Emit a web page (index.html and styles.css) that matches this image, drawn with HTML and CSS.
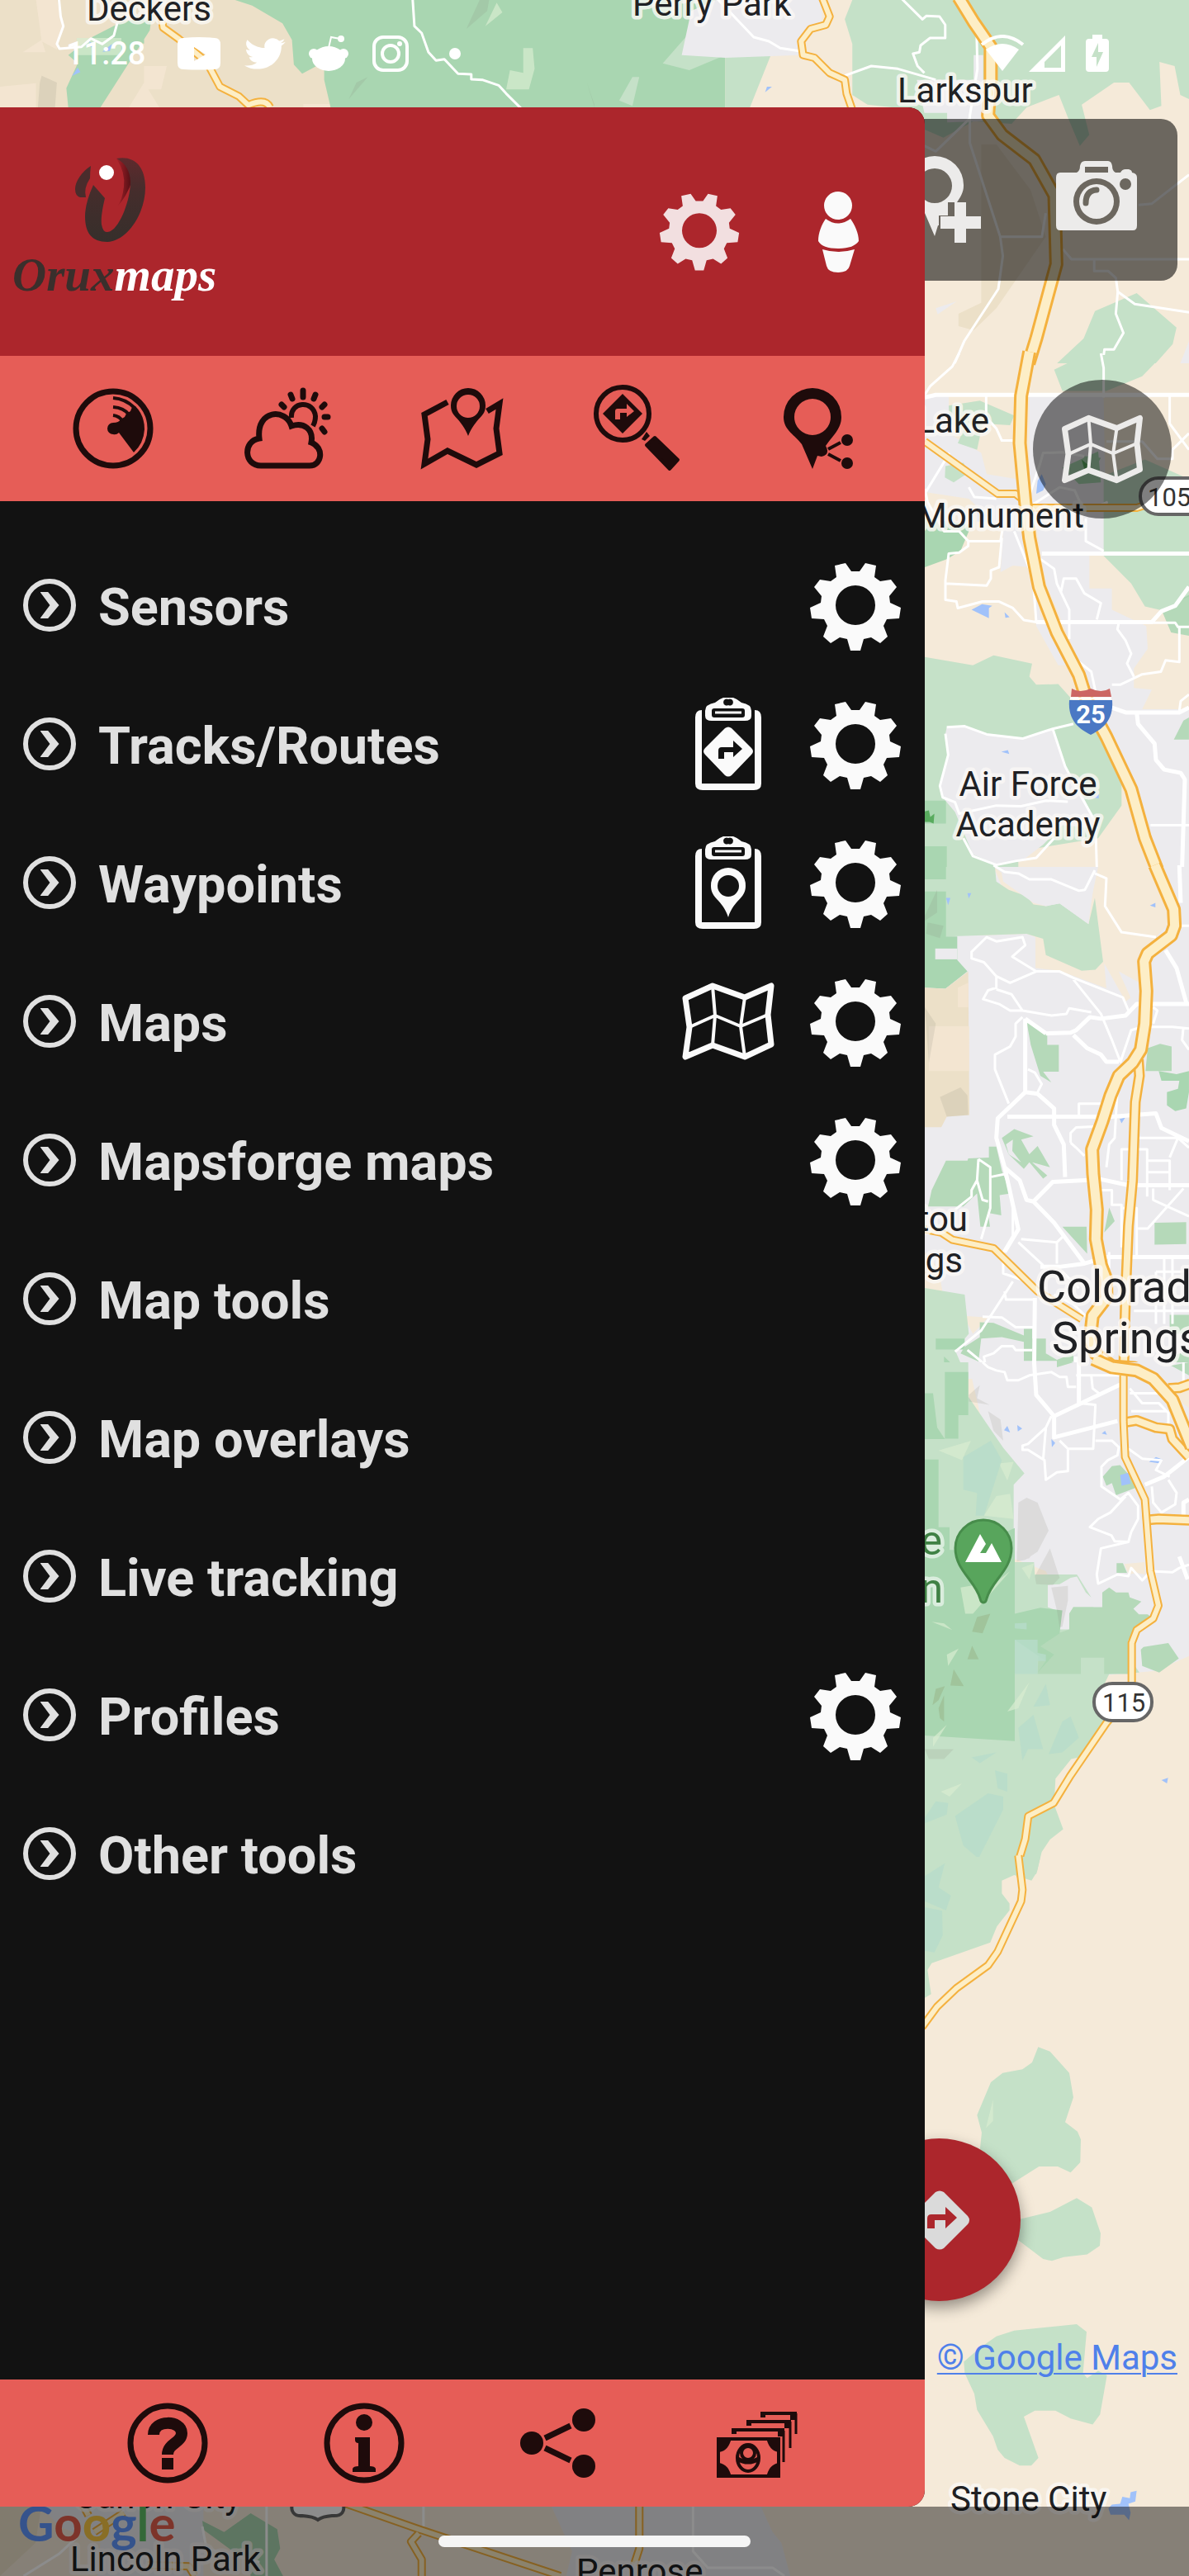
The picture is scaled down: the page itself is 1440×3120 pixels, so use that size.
FILE: index.html
```html
<!DOCTYPE html>
<html lang="en">
<head>
<meta charset="utf-8">
<meta name="viewport" content="width=device-width, initial-scale=1">
<title>OruxMaps</title>
<link rel="stylesheet" href="styles.css">
</head>
<body>
<div class="screen">

<svg class="map" viewBox="0 0 1440 3120" preserveAspectRatio="xMaxYMin slice" aria-hidden="true">
  <defs>
    <path id="n-i25" d="M960 -10L1000 80L1045 170L1045 290L1038 420L1075 490L1160 580L1213 710L1218 960L1165 1230L1145 1320"/>
    <path id="n-67" d="M600 -10L620 60L610 90L570 105L545 150L550 200L580 210L620 265L660 290L665 340L685 420"/>
    <path id="nw-67" d="M425 50L430 100L470 140L545 225L580 315L630 350L655 382Q700 355 712 390"/>
    <path id="c-i25" d="M440 -10L410 125L405 270L425 450L440 560L475 710L540 850L620 980L650 1060L720 1170L810 1330L860 1480L904 1575"/>
    <path id="c-105" d="M60 265L325 425L390 425L412 440M440 468H830L880 455"/>
    <path id="d-i25" d="M896 -6L965 130L968 180L955 210L870 265L857 290L865 380L860 480L845 560L815 600L765 640L735 700L705 780L668 865L672 940L685 1050L682 1140L700 1220L718 1260L720 1320L670 1375L660 1450L680 1490L740 1530L820 1535L890 1562"/>
    <path id="d-87" d="M836 590L840 640L825 720L815 960L800 1100L790 1300L782 1568"/>
    <path id="d-24" d="M60 1110L120 1120L160 1142L310 1168L470 1300L630 1385"/>
    <path id="e-i25" d="M672 -10L740 15L830 25L890 50L960 115L1030 260"/>
    <path id="e-b" d="M945 80L985 78L1025 66M780 185L830 178L900 200L950 205L960 235L1020 290M852 484L910 480L1025 484"/>
    <path id="e-115" d="M782 40L782 180L788 290L860 420L880 640L909 745L890 785L830 820L812 860L812 1010L720 1105L590 1265L528 1350L436 1390L425 1460L398 1535L410 1575"/>
    <path id="f-115" d="M400 -5L415 70L410 95L325 205L290 235L175 285L105 325L50 370"/>
    <path id="s-50" d="M570 505L710 610L950 780M710 625L697 655L715 720L715 785M1084 520L1084 680L1075 740M150 560L140 520M160 620L210 550M250 740L320 745L330 780"/>
    <path id="gear" fill-rule="evenodd" d="M51 15H61L68 5L81 8L79 22L86 27L99 25L106 34L97 45L98 53L111 59L109 72L94 73L90 81L95 94L86 102L75 95L66 97L62 111H50L46 97L37 95L26 102L17 94L22 81L18 73L3 72L1 59L14 53L15 45L6 34L13 25L26 27L33 22L31 8L44 5ZM56 32A24 24 0 1 0 56 80A24 24 0 1 0 56 32Z"/>
    <g id="folded-map" fill="none" stroke="currentColor" stroke-linejoin="round">
      <path stroke-width="7" d="M4 20L37 5L76 19L108 5L104 40L108 76L76 91L37 77L4 91L9 55Z"/>
      <path stroke-width="4" d="M37 5L40 41L37 77M76 19L71 54L76 91M9 55L40 41L71 54L104 40"/>
    </g>
    <g id="clipboard" fill="none" stroke="currentColor">
      <path stroke-width="8" stroke-linejoin="round" d="M24 19Q20 19 20 24V104Q20 108 25 108H87Q92 108 92 104V24Q92 19 88 19"/>
      <path fill="currentColor" fill-rule="evenodd" stroke="none" d="M40 6Q56 -8 72 6Q84 8 84 16V22Q84 28 76 28H36Q28 28 28 22V16Q28 8 40 6ZM56 2A4 4 0 1 0 56 9A4 4 0 1 0 56 2M39 13Q36 13 36 16V21Q36 24 39 24H73Q76 24 76 21V16Q76 13 73 13Z"/>
      <path stroke-width="3" d="M40 18H72"/>
    </g>
  </defs>

  <rect width="1440" height="3120" fill="#f5ead9"/>

  <!-- north-west -->
  <g class="tile" transform="translate(0 0) scale(.4592 .3333)">
    <path class="tan" d="M0 0H1568V390H0Z"/>
    <path class="sand" d="M95 0H150L165 95L150 180L110 150ZM0 315L95 302V390H0ZM380 240H440L425 325H380ZM60 190L110 145L120 190ZM800 378H870V390H800ZM380 300L420 390H340Z"/>
    <path class="forest" d="M180 200L235 140L320 80L400 60L395 110L265 390H180L175 320L205 230ZM620 0L665 20L745 85L770 145L775 235L797 268L855 225L855 290L872 390H1568V0ZM340 120H380V158H340Z"/>
    <path class="pale" d="M1380 175H1405L1410 250L1395 325H1335L1345 255L1380 265ZM1310 10L1325 45L1280 95ZM202 138H320V200H202Z"/>
    <path class="shade" d="M1265 0H1290L1285 40L1230 105ZM110 275L150 300L145 390H0L100 390L105 300ZM920 360L970 280L940 300ZM1548 300L1568 380V390Z"/>
    <path class="water" d="M205 245L212 262L190 276ZM235 150L250 165L240 172ZM295 160L290 185L270 188Z"/>
    <path class="street" d="M155 -10L160 60L167 95L150 160L157 177L215 170L240 140L270 160L300 130L310 80M1088 -10L1093 95L1112 120L1130 190L1150 220L1172 215L1208 268L1243 270V288L1272 290L1315 310L1335 340L1375 395"/>
    <use href="#nw-67" class="casing small"/><use href="#nw-67" class="road small"/>
  </g>

  <!-- north-east -->
  <g class="tile" transform="translate(720 0) scale(.4592 .3333)">
    <path class="forest" d="M0 0H345V390H0Z"/>
    <path class="green" d="M345 200H465L410 390H345ZM180 230L250 120L345 200L250 255ZM100 280H118L100 385L65 365Z"/>
    <path class="green" d="M680 0L660 70L680 160V345L720 380L850 400L870 470L920 500L1000 440L1100 450L1140 390L1225 345L1250 432L1280 530L1305 490L1285 380L1370 300L1410 300L1465 400L1495 385L1490 225L1530 240L1545 345L1568 360V0Z"/>
    <path class="town" d="M255 40L230 200L345 210L540 200L545 150L560 100L600 80V0H320ZM850 290H1000V200H1025V440L930 445V410H870Z"/>
    <path class="tan" d="M1020 525H1060L1150 690L1190 860L1060 1120L1000 1200L960 1185V1140L1020 1100Z"/>
    <path class="green" d="M1430 1065L1535 1190L1525 1250L1480 1320H1220L1290 1230L1320 1130Z"/>
    <path class="water" d="M455 315L468 315L450 335Z"/>
    <path class="town" d="M900 1120L955 1095L905 1142ZM1568 1240V1320H1545Z"/>
    <path class="street" d="M1008 130L1010 250L990 420V520L1070 860L1077 930L1065 1050L975 1240L950 1320M660 275L730 240L800 250L900 290M810 -5L865 70L875 58L910 60L925 90V138H885L860 165L857 190L840 195L852 240L870 265M320 -10L420 135L460 150L490 175L540 185M870 530L900 550L990 430M1070 860H1180L1190 775M1435 745L1470 740L1568 635M1235 905L1258 942H1568M1318 942V985H1355L1375 1010L1380 1060L1425 1105L1568 1135M1380 1060L1375 1140L1395 1210L1370 1270H1345L1340 1320"/>
    <use href="#n-67" class="casing small"/><use href="#n-67" class="road small"/>
    <use href="#n-i25" class="casing"/><use href="#n-i25" class="road"/>
  </g>

  <!-- Monument and the Air Force Academy -->
  <g class="tile" transform="translate(1100 430) scale(.3333 .3954)">
    <path class="town" d="M60 120H147V240L265 300L285 365L395 380L440 600L480 800L585 950H545L465 830L440 650L380 645L335 665L345 540L220 440L60 420ZM440 125H1020L710 130L720 600L658 610V715H740V780L865 830L870 900L820 960V1020L885 1025L850 1085H1020V1568H880L850 1400L700 1130L600 900L500 700L440 400Z"/>
    <path class="green" d="M530 45L640 0H925L850 65L720 110H560ZM60 925L235 950L310 920L450 945L440 985L465 1010L545 1008L590 1050L700 1150L775 1290V1380L690 1480L400 1520V1568H60ZM147 155L260 140L385 185L370 215L270 210L250 290L180 270L200 230L150 210ZM710 370L860 320L1020 380V745L960 790L860 770L810 700L710 615ZM135 340L200 330L220 360L165 390L133 375Z"/>
    <path class="forest" d="M60 500L230 520L190 600L140 625L60 650ZM560 345L690 295L700 390L620 395ZM985 750L1020 735V815H985ZM60 1365H137V1435H60ZM60 1505H140V1568H60ZM575 1370L620 1350L640 1390L600 1410Z"/>
    <path class="park" d="M1000 1120L1020 1110V1178H965ZM920 780L1020 740V860L955 850Z"/>
    <path class="town" d="M140 1140L205 1137L285 1162L415 1175L525 1145L570 1260L640 1360L690 1450L560 1440L490 1500L420 1545L320 1560L235 1530L170 1400L120 1350L115 1320L145 1225L135 1160Z"/>
    <path class="forest" d="M625 345L640 310L700 315L680 345ZM630 390L655 355L650 390Z"/>
    <path class="wood" d="M60 1398L75 1395L80 1415L95 1405L92 1435L78 1430L60 1430ZM630 320L665 345L640 350Z"/>
    <path class="water" d="M230 780L268 763L305 768L293 775V806ZM350 788L368 803L353 805ZM338 1215L362 1210L367 1222ZM485 365L500 395L490 415L465 425L470 385ZM250 480L290 490L285 510H250ZM670 1355L692 1345V1358Z"/>
    <path class="street wide" d="M60 130L100 122H1020M485 608H1020M465 818H885L920 785L970 768L1020 710M740 1080L790 1095H985L1020 1080M830 1095L835 1130L895 1190L900 1240L930 1270L990 1280L1005 1300L995 1568"/>
    <path class="street" d="M60 122L80 95L160 35L185 -5M283 122V190L320 225L340 262H380M700 -5L710 40V130M60 410L70 450L130 540L185 540L218 570H335L343 530M218 570V585L185 605L147 608L135 690V750L175 755L180 775L270 755H330L380 775L420 812L465 818L455 700M135 700L285 706L300 685V660L330 650L340 560M385 540L445 665M480 625L530 655L540 700L585 780V870M555 725L565 685L610 685L640 730L700 760L685 810M765 820L760 840L790 875L810 915L795 945L820 985M985 835L985 940L935 935L918 970L850 978L770 1010H740M885 820H970L980 833H1020M590 920L665 970L680 1030M135 1160L145 1225L115 1320L125 1355L170 1370L185 1405L320 1380L410 1382L500 1365L580 1368M140 1140L205 1137L285 1162L415 1175L525 1145L600 1130M525 1145L570 1260L620 1340L680 1430L685 1568M200 1480L235 1535L320 1562L390 1550L465 1540L530 1480M950 125L950 210L1020 290M720 265H850L905 318H960V290L1020 240M440 430L480 330L490 300L560 298L640 310M440 465L550 405L605 415L640 480L725 450M985 1090L990 1060L1020 1040M60 425L150 300M220 405L240 435L320 440M645 500V570L710 600M880 1440H1020"/>
    <use href="#c-105" class="casing small"/><use href="#c-105" class="road small"/>
    <use href="#c-i25" class="casing"/><use href="#c-i25" class="road"/>
  </g>

  <!-- Colorado Springs -->
  <g class="tile" transform="translate(1100 1050) scale(.3333 .3954)">
    <path class="town" d="M60 0H1020V1568H60Z"/>
    <path class="sand-flat" d="M310 0L340 60L250 210L430 205L462 215V310L550 318L720 372L712 295L790 412L808 400L765 320L840 355L850 260L950 170L900 0H690L640 200ZM60 1180L110 1230L125 1305L60 1290ZM200 1375L290 1380L235 1430Z"/>
    <path class="green" d="M60 0H315L320 45L365 70L430 90L455 115L500 120L550 112L655 175L678 95L708 290L680 315L630 318L500 270L490 220L430 205L140 213H60ZM60 1290L205 1310L220 1430L170 1480L215 1568H60Z"/>
    <path class="town" d="M335 0H685L678 30L655 175L550 112L500 120L455 110L345 45Z"/>
    <path class="forest" d="M60 75H137V213H178V285L215 320L135 373L60 370ZM100 1445H205V1478H100ZM130 1500L215 1568H130ZM60 0H137V38H60Z"/>
    <path class="town" d="M98 250H178V283H98Z"/>
    <path class="tan" d="M60 370L135 373L218 320L222 760L140 765L120 797H60Z"/>
    <path class="sand" d="M75 488H222V625H75ZM180 370L218 355V430H180Z"/>
    <path class="shade" d="M60 150L105 70V140L60 165ZM70 170L128 180L115 218L65 205ZM115 705L190 675L215 700L218 760L140 765ZM75 600L100 480L60 430Z"/>
    <path class="park" d="M430 473L505 515V545H547V627H490L520 660L480 640L445 545ZM870 555L915 542L957 550V625H862ZM137 900H215L218 893L293 890V857H320L340 930L372 1000L332 1005L338 1067L290 1060L297 1102H262L250 1000L200 1040L72 1040L85 990ZM340 830L385 803L455 825L410 835L440 880L470 855L515 920L450 905L505 945L490 955L440 905L420 925L365 880ZM560 1102H648L650 1185ZM895 1090L1010 1088V1155L895 1157ZM730 1043L750 1085L712 1120ZM260 1395L310 1397L420 1435V1415H450V1470L420 1455L340 1440L265 1445L255 1515L190 1490L205 1470L260 1440ZM420 1445H500V1490L540 1510L600 1490V1515L540 1533V1513H420ZM950 1372H1020V1430H950ZM955 1500L1020 1480V1560L985 1558Z"/>
    <path class="forest" d="M910 625L975 635L1020 625V690L1010 740L970 748L940 730V690L980 680L985 655L920 655Z"/>
    <path class="town" d="M355 850L380 835L378 870L410 905L365 880Z"/>
    <path class="water" d="M137 95H153L145 117ZM215 80H229L220 97ZM878 118L898 110V124ZM768 772L788 768L775 785Z"/>
    <path class="street wide" d="M425 465V690L470 695L530 740V790L565 850L570 950M500 510L425 465M500 510L590 508L610 500L660 460L700 465L790 455L830 420H1020M600 515L650 555L700 575L720 597H765M360 765H740L900 755L920 800L1020 840M425 690L325 770L320 830L350 920L400 1110L350 1180M350 920L405 960L430 1020L455 1025L530 1090L640 1215L720 1195H1020M455 1025L525 965L700 957L800 975H1020M985 -5L990 110M935 255L975 310L1010 415M460 1320L457 1568M640 1215L550 1225H480M610 1500V1568"/>
    <path class="street" d="M310 -5L350 15L400 20L440 38L520 38L620 73L642 70L678 10M678 20L720 35L715 120L775 200L900 215M465 320L370 355L320 335L275 292L230 280V260L285 215L320 228L415 215L425 240L378 275L465 320L550 320L600 340L780 400L800 440M320 335V370L290 378L272 405L330 420L370 440H415L375 390L320 375M415 440L520 455L575 450L585 433L665 445M600 345L700 450L740 530L770 595M415 460L390 480V520L370 550L315 575V620L365 725M435 620L460 630L485 665L470 690M770 600L810 500L850 490H960L1020 495M620 760V725H700M590 845V815L610 798L690 795M590 845L610 860L640 885M775 960V865H868V1010M830 830H980L1020 860M870 900H950V990M870 935H950M980 830L950 890M700 990H740V1035H775V1165M780 1045H830V1190M835 1108H870L1000 985M890 985V1020L1020 1070M255 895L298 920V1045L265 1140M255 895L250 960L230 990V1010L170 1050M250 960L270 1020L290 1025M298 950L355 940M380 1045V1130L345 1180V1245L500 1290M400 1150L490 1220M410 1140L540 1150L565 1130M540 1150V1215M170 1485L265 1420L380 1270M350 1300L355 1325H460M270 1378L340 1380L390 1410H460M215 1480L280 1525L275 1500L310 1490L340 1468H380L390 1480H450M900 1240H1020M900 1240V1400M930 1190V1400M960 1200V1400M820 1360H1020M650 1380L600 1340L530 1310M760 680L750 830L730 850L720 920M990 180H1020M890 430L905 440L890 480M1000 490L995 530L1020 560M730 1180V1230M560 1240L620 1290"/>
    <use href="#d-24" class="casing small"/><use href="#d-24" class="road small"/>
    <use href="#d-87" class="casing mid"/><use href="#d-87" class="road mid"/>
    <use href="#d-i25" class="casing"/><use href="#d-i25" class="road"/>
  </g>

  <!-- Cheyenne Mountain -->
  <g class="tile" transform="translate(1100 1650) scale(.3333 .3954)">
    <path class="town" d="M218 0H1020V900L900 945L700 960L500 640L380 600Z"/>
    <path class="green" d="M60 0H218V105L345 262L422 340L383 375V510L387 612L457 612L460 650H613L665 720L640 710L840 950L730 955L710 990L740 1105L620 1210L592 1215L535 1275L530 1355L563 1430L515 1462L485 1500L465 1568H60Z"/>
    <path class="town" d="M507 682L550 680L590 660L613 656L645 705L665 720L705 700V750H600L585 770V818H550L540 760L507 750Z"/>
    <path class="park" d="M585 770L600 750H705V705L730 690L755 705H800L805 720L847 733L818 755L838 772H870L890 785L830 820L800 850V955H712V905H627V955H470L475 850L585 818ZM845 880L855 872L945 860L983 907L912 950L850 930ZM707 350L740 318L770 315L840 380L755 407L740 370L720 378ZM757 615H780L795 645H757ZM540 0H600L540 15ZM955 10L1020 0V40Z"/>
    <path class="forest" d="M133 30H218V162H182V234H133ZM60 95H90L105 200L133 235H60ZM60 298H110V505H60ZM60 505H150V575H205L387 508V1160L60 1143ZM387 770L480 752L560 760L550 830L480 870L530 895L470 950L500 915L387 850Z"/>
    <path class="pale" d="M110 270L228 240L195 300ZM330 310L383 305L360 362ZM275 470L320 410L370 403L383 480ZM190 690L260 680L295 690L370 640L235 770H207ZM85 795L130 800L160 820ZM140 895L183 877L145 930ZM360 1070L440 980L400 1060ZM90 1150L140 1110L90 1178ZM118 1315L195 1290L150 1330ZM412 630L457 615L440 665Z"/>
    <path class="teal" d="M200 290L300 240L340 300L275 470L245 470L250 400L200 390ZM387 850H470L470 890L500 895V915H470V955H387ZM400 1120L455 1080L490 1185L435 1185L415 1220ZM510 1200L560 1100L590 1085L620 1150L560 1195ZM170 1390L290 1320L345 1330L345 1370L255 1520L200 1480ZM60 1395L100 1345L145 1350L140 1385L60 1412ZM315 1250L360 1260V1315L325 1305ZM230 1210L320 1195L260 1228ZM455 1055L500 985L515 1050ZM387 800L430 798V818L387 815Z"/>
    <path class="shade" d="M400 430L430 415L470 430L510 515L470 580L425 605L395 610ZM425 530L455 505L475 550L440 600L395 610V580ZM460 655L515 570L550 660L525 682L465 680ZM520 690L580 685V730L560 810L550 812L540 760ZM60 1185H165L130 1215H75ZM220 100L260 70L250 110L295 130L220 120ZM290 150L335 175L345 240L310 210Z"/>
    <path class="olive" d="M232 825L250 780L298 770L270 830ZM215 910L232 868L256 910ZM153 990L165 940L202 992ZM88 1050L100 1000L133 992L110 1035ZM110 1060L130 1020V1100L115 1090Z"/>
    <path class="sand-flat" d="M785 618L858 612L860 650L830 645L800 650ZM940 60L1020 70V140L970 110Z"/>
    <path class="water" d="M770 345L800 338L808 372L775 378ZM875 305L900 290L924 298L915 310ZM348 208L360 195L370 215ZM396 192L414 203L398 212ZM520 235L534 247L522 260ZM703 218L715 210L722 222ZM920 1280L944 1273L940 1290Z"/>
    <path class="street wide" d="M457 -5L465 100L530 165V230L760 180M530 165L770 68M620 0V130M860 375L930 350L1020 290M985 595L1015 665M1000 470V430L1020 420"/>
    <path class="street" d="M270 0L290 15L320 25L350 30L360 55H400L440 40L520 30L550 45H575L580 75H610M520 165L500 200L435 250L415 255V268H435L495 300L500 360L540 337L580 333V265L550 240M500 200L490 300M580 265H672L680 130L620 125M680 240H740L765 260L760 285L725 300L702 320V380L770 420L800 400L835 440V480L810 520L800 550L750 548L738 530L660 505L690 480L735 460L790 410M800 550L700 570L685 650L690 678L760 650L800 655L810 630L850 668L870 650M885 380L890 430L920 460L970 435L975 400L945 360M880 640L960 643L985 630L1020 620M665 40L670 80L700 100M805 80L850 125H910L945 155V190M805 95H940M810 150H940M610 40H770M800 265L850 295L920 300L900 330L950 350M1000 0V60"/>
    <use href="#e-b" class="casing mid"/><use href="#e-b" class="road mid"/>
    <use href="#e-115" class="casing small"/><use href="#e-115" class="road small"/>
    <use href="#e-i25" class="casing"/><use href="#e-i25" class="road"/>
  </g>

  <!-- south-east plains -->
  <g class="tile" transform="translate(1100 2250) scale(.3333 .5549)">
    <path class="green" d="M60 -2H480L468 30L448 50L385 38L340 50V78L368 100V115L322 150L298 185L85 230L70 245L83 298L60 306ZM250 562L300 490L343 470L415 462L450 447L472 413L515 423L585 470L600 523L570 577L615 598L627 615L625 665L590 687L543 674H475L380 710L265 740L260 640L267 600ZM400 790L515 773L612 743L667 763L699 820L696 847L650 866L565 872L522 880L490 876L400 835ZM202 1100L260 1070L320 1045L385 1032L612 1018L648 1035L635 1125L650 1136L690 1120L722 1130L697 1215L670 1237L590 1224L535 1207H460L420 1220L473 1310L447 1327H405L350 1310L325 1292L308 1263L250 1205L240 1170L205 1125Z"/>
    <path class="teal" d="M60 40L133 12L110 65L155 83L137 115L60 95ZM60 108L123 116L125 170L95 207L60 203Z"/>
    <path class="pale" d="M282 590L308 528V575Z"/>
    <path class="water" d="M727 1420L740 1412L770 1410L778 1395L805 1398L808 1385L830 1382L825 1405L800 1410L808 1430L802 1446L785 1434L735 1434Z"/>
    <use href="#f-115" class="casing small"/><use href="#f-115" class="road small"/>
  </g>

  <!-- southern edge -->
  <g class="tile" transform="translate(0 2860) scale(.7143 .3333)">
    <path class="tan" d="M0 528H70L60 660L0 780Z"/>
    <path class="town" d="M70 528H345V780H165L170 660L100 600ZM935 528H1290L1310 620L1325 660L1340 780H960L970 690Z"/>
    <path class="forest" d="M343 580L380 620L425 552L470 610L475 680L465 720L480 780H425L420 730L345 612Z"/>
    <path class="street" d="M718 520V630M452 520V780M343 600L350 680L440 730M1175 520V690L1200 750H1310L1330 780M40 780L100 700L130 640"/>
    <use href="#s-50" class="casing small"/><use href="#s-50" class="road small"/>
  </g>

  <g class="place">
    <text x="105" y="25">Deckers</text>
    <text x="766" y="19">Perry Park</text>
    <text x="1087" y="124">Larkspur</text>
    <text x="1198" y="524" text-anchor="end">Lake</text>
    <text x="1313" y="639" text-anchor="end">Monument</text>
    <text x="1245" y="964" text-anchor="middle">Air Force</text>
    <text x="1245" y="1013" text-anchor="middle">Academy</text>
    <text x="1172" y="1491" text-anchor="end">tou</text>
    <text x="1166" y="1541" text-anchor="end">gs</text>
    <text x="1151" y="3041">Stone City</text>
    <text x="90" y="3038">Cañon City</text>
    <text x="85" y="3114">Lincoln Park</text>
    <text x="698" y="3129">Penrose</text>
  </g>
  <g class="place city">
    <text x="1256" y="1577">Colorado</text>
    <text x="1274" y="1639">Springs</text>
  </g>
  <g class="place summit" text-anchor="end">
    <text x="1141" y="1883">e</text>
    <text x="1142" y="1941">n</text>
  </g>

  <!-- mountain pin -->
  <path d="M1191 1941Q1188 1941 1187 1936C1181 1914 1157 1902 1157 1875A34 34 0 0 1 1225 1875C1225 1902 1201 1914 1195 1936Q1194 1941 1191 1941Z" fill="#58a55c" stroke="#478c4b" stroke-width="3"/>
  <path d="M1169 1892L1187 1858L1194 1870L1187 1881H1194L1201 1869L1213 1892Z" fill="#fff"/>

  <!-- road shields -->
  <g class="shield">
    <rect x="1381" y="579" width="80" height="44" rx="22"/>
    <text x="1390" y="613">105</text>
    <rect x="1325" y="2039" width="70" height="45" rx="22"/>
    <text x="1335" y="2073">115</text>
    <path d="M355 3030C350 3042 357 3048 366 3047Q380 3048 385 3052Q390 3048 402 3047C414 3048 419 3042 415 3030Z"/>
  </g>
  <path d="M1298 834Q1308 840 1321 834Q1334 840 1344 834L1346 844H1297Z" fill="#cc6663"/>
  <path d="M1295 848H1347C1349 874 1334 883 1321 890C1308 883 1293 874 1295 848Z" fill="#4a78c4"/>
  <path d="M1296 846H1346" stroke="#fff" stroke-width="3"/>
  <text class="interstate" x="1321" y="876" text-anchor="middle">25</text>

  <text class="google" x="22" y="3078"><tspan fill="#6297ff">G</tspan><tspan fill="#e35f4e">o</tspan><tspan fill="#f9c845">o</tspan><tspan fill="#6297ff">g</tspan><tspan fill="#5fbd66">l</tspan><tspan fill="#e35f4e">e</tspan></text>
</svg>

<header class="status">
  <time class="clock">11:28</time>
  <div class="notices">
    <svg width="54" height="46" viewBox="0 0 54 46"><path fill="#fff" fill-rule="evenodd" d="M8 4Q27 2 46 4Q53 4 53 12V34Q53 42 46 42Q27 43 8 42Q1 42 1 34V12Q1 4 8 4ZM21 15V32L35 24Z"/></svg>
    <svg width="50" height="46" viewBox="0 0 24 24" preserveAspectRatio="none"><path fill="#fff" d="M23.9 4.6a10 10 0 0 1-2.8.8 5 5 0 0 0 2.2-2.7c-1 .5-2 1-3.1 1.200a4.900 4.900 0 0 0-8.400 4.500C7.700 8.200 4.100 6.300 1.700 3.200a5 5 0 0 0 1.500 6.600c-.8 0-1.600-.2-2.200-.6v.1c0 2.400 1.700 4.400 3.900 4.800a5 5 0 0 1-2.200.1 4.900 4.900 0 0 0 4.600 3.400A9.900 9.900 0 0 1 0 19.500a14 14 0 0 0 7.500 2.200c9.100 0 14-7.500 14-14v-.6a10 10 0 0 0 2.400-2.500z"/></svg>
    <svg width="48" height="46" viewBox="0 0 48 46"><g fill="#fff"><ellipse cx="24" cy="29" rx="20" ry="15"/><circle cx="6" cy="23" r="6"/><circle cx="42" cy="23" r="6"/><circle cx="39" cy="5" r="4"/></g><path d="M24 16L27 3L38 5" fill="none" stroke="#fff" stroke-width="2"/></svg>
    <svg width="46" height="46" viewBox="0 0 46 46" fill="none" stroke="#fff" stroke-width="4"><rect x="3" y="3" width="40" height="40" rx="11"/><circle cx="23" cy="23" r="10"/><circle cx="34" cy="11" r="3" fill="#fff" stroke="none"/></svg>
    <svg width="14" height="14" viewBox="0 0 14 14"><circle cx="7" cy="7" r="7" fill="#fff"/></svg>
  </div>
  <div class="signals">
    <svg width="54" height="46" viewBox="0 0 54 46"><path fill="#fff" d="M7 18Q27 4 47 18L27 44Z"/><path d="M2 12Q27 -8 52 12" fill="none" stroke="#fff" stroke-width="4"/></svg>
    <svg width="46" height="46" viewBox="0 0 46 46"><path fill="#fff" fill-rule="evenodd" d="M1 45L45 1V45ZM20 40H40V13L20 33Z"/></svg>
    <svg width="28" height="46" viewBox="0 0 28 46"><path fill="#fff" fill-rule="evenodd" d="M8 0H20V5H24Q28 5 28 9V41Q28 45 24 45H4Q0 45 0 41V9Q0 5 4 5H8ZM15 10L7 27H13V39L21 21H15Z"/></svg>
  </div>
</header>

<main class="stage">
  <div class="map-bar">
    <button class="icon" aria-label="New waypoint"><svg width="98" height="106" viewBox="0 0 98 106"><path fill="#ecebea" fill-rule="evenodd" d="M36 0A35 35 0 0 1 71 36C71 44 67 50 63 56H52V72H41V84H40L36 97L21 62C12 54 1 46 1 36A35 35 0 0 1 36 0ZM36 15A21 21 0 1 0 36 57A21 21 0 1 0 36 15Z"/><path fill="#ecebea" d="M60 56H74V73H92V88H74V105H60V88H43V73H60Z"/></svg></button>
    <button class="icon" aria-label="Take photo"><svg width="98" height="106" viewBox="0 0 98 106"><path fill="#ecebea" fill-rule="evenodd" d="M5 20H25Q29 18 29 12Q30 6 35 6H63Q67 6 68 12Q68 18 72 20H78Q80 16 84 16H88Q92 17 92 20Q98 21 98 26V84Q98 90 93 90H5Q0 90 0 84V26Q0 20 5 20ZM35 13V20H63V13ZM49 27A28 28 0 1 0 49 83A28 28 0 1 0 49 27ZM84 27A7 7 0 1 0 84 41A7 7 0 1 0 84 27Z"/><circle cx="49" cy="55" r="21" fill="#ecebea"/><path d="M36 57Q36 42 49 41" fill="none" stroke="#6c685f" stroke-width="7" stroke-linecap="round"/></svg></button>
  </div>
  <button class="icon map-switch" aria-label="Switch map"><svg width="98" height="98" viewBox="0 -8 112 112"><use href="#folded-map"/></svg></button>
  <button class="icon route" aria-label="Navigate"><svg width="76" height="76" viewBox="0 0 76 76"><path fill="#dadada" d="M33 4Q38 1 43 4L72 33Q76 38 72 43L43 72Q38 75 33 72L4 43Q0 38 4 33Z"/><path fill="#ac262c" d="M23 48V36Q23 31 28 31H45V22L59 35L45 48V38H32V48Z"/></svg></button>
  <a class="credit" href="#maps">© Google Maps</a>

  <aside class="drawer">
    <header class="brand">
      <div class="logo">
        <svg width="96" height="104" viewBox="0 0 96 104">
          <defs>
            <linearGradient id="ink" x1="0" y1="1" x2="0" y2="0"><stop offset="0" stop-color="#362f2b"/><stop offset=".6" stop-color="#452d2c"/><stop offset="1" stop-color="#5e2a2d"/></linearGradient>
            <linearGradient id="fold" x1="0" y1="0" x2="1" y2="0"><stop offset="0" stop-color="#a82129"/><stop offset="1" stop-color="#4c0e13"/></linearGradient>
          </defs>
          <path fill="url(#fold)" d="M50 1Q61 18 59 35Q57 52 51 59Q62 48 69 28L63 6Z"/>
          <path fill="#4a2c2c" d="M19 10C8 17 0 29 0 38Q0 46 6 48H13Q10 37 18 25Q18 17 19 10Z"/>
          <path fill="url(#ink)" d="M22 33L36 49C33 62 31 73 32 81Q34 91 39 90C52 90 67 53 67 29Q66 9 50 1C72 -3 85 11 85 36C85 68 63 101 39 102C20 102 12 91 12 71Q12 55 22 33Z"/>
          <circle cx="38" cy="18" r="9" fill="#fff"/>
        </svg>
        <p class="wordmark">Orux<span>maps</span></p>
      </div>
      <div class="brand-actions">
        <button class="icon muted" aria-label="Settings"><svg width="98" height="98" viewBox="0 2 112 112"><use href="#gear" fill="currentColor"/></svg></button>
        <button class="icon" aria-label="Street view"><svg width="98" height="98" viewBox="0 0 98 98" fill="#fafafa"><circle cx="49" cy="17" r="17"/><path d="M34 33Q49 44 64 33C69 40 74 50 74 60Q68 69 49 69Q30 69 25 60C25 50 29 40 34 33ZM30 70Q49 76 69 70L63 90Q61 98 49 98Q37 98 35 90Z"/></svg></button>
      </div>
    </header>

    <nav class="tools" aria-label="Shortcuts">
      <button class="icon" aria-label="Radar"><svg width="106" height="106" viewBox="0 0 106 106"><circle cx="53" cy="53" r="45" fill="none" stroke="currentColor" stroke-width="7"/><path fill="currentColor" d="M53 46Q60 46 62 42L67 39L69 35L74 32L76 27L80 26Q91 37 91 54Q90 71 78 82L60 58Q57 61 53 60A7 7 0 0 1 53 46Z"/><path fill="none" stroke="currentColor" stroke-width="4" d="M53 16Q68 17 79 28M53 27Q66 28 72 36M53 37Q61 38 64 44"/></svg></button>
      <button class="icon" aria-label="Weather"><svg width="106" height="106" viewBox="0 0 106 106" fill="none" stroke="currentColor" stroke-width="7"><path d="M20 98C-1 98 -2 68 18 65C14 30 50 28 57 50C72 45 84 54 81 70C97 76 94 98 79 98Z"/><path stroke-width="6" d="M57 40C55 20 84 18 86 38Q86 45 83 50"/><path stroke-width="7" stroke-linecap="round" d="M71 7V15M56 12L58 17M86 12L84 17M45 24L48 27M97 24L94 27M97 39H101M94 53L97 57"/></svg></button>
      <button class="icon" aria-label="Place on map"><svg width="106" height="106" viewBox="0 0 106 106"><path fill="none" stroke="currentColor" stroke-width="7" d="M35 21L7 36L11 66L7 96L35 80L70 97L98 83L94 53L98 23L83 32"/><path fill="currentColor" fill-rule="evenodd" d="M60 4A21 21 0 0 1 81 25C81 40 70 38 60 62C50 38 39 40 39 25A21 21 0 0 1 60 4ZM60 12A14 14 0 1 0 60 40A14 14 0 1 0 60 12Z"/></svg></button>
      <button class="icon" aria-label="Search routes"><svg width="106" height="106" viewBox="0 0 106 106"><circle cx="35" cy="35" r="32" fill="none" stroke="currentColor" stroke-width="6"/><path fill="currentColor" d="M35 11L59 35L35 59L11 35ZM58 66L64 57L68 62L62 68Z"/><path fill="#e65d57" d="M26 42V32Q26 29 29 29H40V23L49 32L40 39V34H32V42Z"/><path fill="currentColor" stroke="currentColor" stroke-width="4" stroke-linejoin="round" d="M74 64L102 91L92 102L64 73Z"/></svg></button>
      <button class="icon" aria-label="Share position"><svg width="106" height="106" viewBox="0 0 106 106"><path fill="currentColor" fill-rule="evenodd" d="M54 4A35 35 0 0 1 89 39C89 54 78 62 70 74Q76 84 65 87L60 86L54 102L41 72C32 60 19 55 19 39A35 35 0 0 1 54 4ZM54 17A22 22 0 1 0 54 61A22 22 0 1 0 54 17Z"/><circle cx="96" cy="67" r="7" fill="currentColor"/><circle cx="96" cy="95" r="7" fill="currentColor"/><path stroke="currentColor" stroke-width="4" d="M73 78L88 70M73 84L88 92"/></svg></button>
    </nav>

    <ul class="menu">
      <li><button class="entry"><i class="bullet"></i><span>Sensors</span></button><button class="icon" aria-label="Sensor settings"><svg width="112" height="112" viewBox="0 0 112 112"><use href="#gear" fill="currentColor"/></svg></button></li>
      <li><button class="entry"><i class="bullet"></i><span>Tracks/Routes</span></button><button class="icon" aria-label="Manage tracks"><svg width="112" height="112" viewBox="0 0 112 112"><use href="#clipboard"/><path fill="currentColor" d="M52 37Q56 34 60 37L84 61Q88 65 84 69L60 94Q56 97 52 94L28 69Q24 65 28 61Z"/><path fill="#121212" d="M44 74V64Q44 60 48 60H62V52L73 62L62 72V66H51V74Z"/></svg></button><button class="icon" aria-label="Track settings"><svg width="112" height="112" viewBox="0 0 112 112"><use href="#gear" fill="currentColor"/></svg></button></li>
      <li><button class="entry"><i class="bullet"></i><span>Waypoints</span></button><button class="icon" aria-label="Manage waypoints"><svg width="112" height="112" viewBox="0 0 112 112"><use href="#clipboard"/><path fill="currentColor" fill-rule="evenodd" d="M56 38A21 21 0 0 1 77 60C77 76 63 76 56 98C49 76 35 76 35 60A21 21 0 0 1 56 38ZM56 47A13 13 0 1 0 56 73A13 13 0 1 0 56 47Z"/></svg></button><button class="icon" aria-label="Waypoint settings"><svg width="112" height="112" viewBox="0 0 112 112"><use href="#gear" fill="currentColor"/></svg></button></li>
      <li><button class="entry"><i class="bullet"></i><span>Maps</span></button><button class="icon" aria-label="Choose map"><svg width="112" height="112" viewBox="0 -8 112 112"><use href="#folded-map"/></svg></button><button class="icon" aria-label="Map settings"><svg width="112" height="112" viewBox="0 0 112 112"><use href="#gear" fill="currentColor"/></svg></button></li>
      <li><button class="entry"><i class="bullet"></i><span>Mapsforge maps</span></button><button class="icon" aria-label="Mapsforge settings"><svg width="112" height="112" viewBox="0 0 112 112"><use href="#gear" fill="currentColor"/></svg></button></li>
      <li><button class="entry"><i class="bullet"></i><span>Map tools</span></button></li>
      <li><button class="entry"><i class="bullet"></i><span>Map overlays</span></button></li>
      <li><button class="entry"><i class="bullet"></i><span>Live tracking</span></button></li>
      <li><button class="entry"><i class="bullet"></i><span>Profiles</span></button><button class="icon" aria-label="Profile settings"><svg width="112" height="112" viewBox="0 0 112 112"><use href="#gear" fill="currentColor"/></svg></button></li>
      <li><button class="entry"><i class="bullet"></i><span>Other tools</span></button></li>
    </ul>

    <footer class="links">
      <button class="icon" aria-label="Help"><svg width="98" height="98" viewBox="0 0 98 98" fill="none" stroke="currentColor"><circle cx="49" cy="49" r="45" stroke-width="7"/><path stroke-width="14" d="M32 39C32 20 66 21 66 37C66 49 49 49 49 63M49 67V81"/></svg></button>
      <button class="icon" aria-label="About"><svg width="98" height="98" viewBox="0 0 98 98"><circle cx="49" cy="49" r="45" fill="none" stroke="currentColor" stroke-width="7"/><circle cx="49" cy="24" r="10" fill="currentColor"/><path fill="currentColor" d="M38 42H56V77Q62 77 63 80V84H35V80Q36 77 42 77V49Q38 49 38 45Z"/></svg></button>
      <button class="icon" aria-label="Share"><svg width="98" height="98" viewBox="0 0 98 98"><g fill="currentColor"><circle cx="14" cy="49" r="14"/><circle cx="77" cy="21" r="14"/><circle cx="77" cy="77" r="14"/></g><path stroke="currentColor" stroke-width="7" d="M30 43L61 28M30 55L61 70"/></svg></button>
      <button class="icon" aria-label="Donate"><svg width="98" height="98" viewBox="0 0 98 98" fill="none" stroke="currentColor"><path stroke-width="4" d="M2 44H75V89H2Z"/><path fill="currentColor" stroke="none" d="M0 42H18Q15 58 3 60H0ZM77 42H60Q63 58 75 60H77ZM0 91H18Q15 75 3 73H0ZM77 91H60Q63 75 75 73H77Z"/><ellipse cx="38" cy="67" rx="13" ry="16" stroke-width="4"/><circle cx="38" cy="61" r="8" stroke-width="4"/><path stroke-width="5" d="M25 68Q38 76 51 68"/><path stroke-width="3" d="M81 34V72M89 23V55M96 13V38"/><path stroke-width="4" d="M18 33H82M36 23H90M53 13H97"/><path stroke-width="6" d="M21 32V38M39 22V28M56 12V18M77 33V41M85 23V31M92 13V21"/></svg></button>
    </footer>
  </aside>
</main>

<div class="gesture-bar"><span class="handle"></span></div>
</div>
</body>
</html>
```
FILE: styles.css
```css
* { box-sizing: border-box; }

body {
  margin: 0;
  font-family: Roboto, "Noto Sans", sans-serif;
}

button {
  margin: 0;
  padding: 0;
  border: 0;
  background: none;
  color: inherit;
  font: inherit;
}

svg { display: block; flex: none; }

.screen {
  position: relative;
  display: flex;
  flex-direction: column;
  min-height: 100vh;
  overflow: hidden;
  background: #f5ead9;
}

/* Map canvas */
.map {
  position: absolute;
  inset: 0;
  width: 100%;
  height: 100%;
}

.map path { vector-effect: non-scaling-stroke; }
.tan { fill: #ece0c8; }
.sand { fill: #f5e6d3; opacity: 0.8; }
.sand-flat { fill: #f5ead9; }
.green { fill: #c5e1c8; }
.forest { fill: #a9d6b1; }
.park { fill: #b5d9b9; }
.town { fill: #ecebee; }
.pale { fill: #d8ecd0; opacity: 0.7; }
.teal { fill: #b7dccb; opacity: 0.8; }
.shade { fill: #8b8a7a; opacity: 0.16; }
.olive { fill: #9dbf96; opacity: 0.8; }
.wood { fill: #58ab5e; }
.water { fill: #a1c2fa; }

.street { fill: none; stroke: #fff; stroke-width: 3; stroke-linejoin: round; }
.street.wide { stroke-width: 5; }
.casing, .road { fill: none; stroke-linejoin: round; }
.casing { stroke: #f4b13e; stroke-width: 17; }
.road { stroke: #fdeec6; stroke-width: 11; }
.casing.mid { stroke-width: 13; }
.road.mid { stroke-width: 8; }
.casing.small { stroke-width: 10; }
.road.small { stroke-width: 6; }

.place text {
  fill: #202124;
  stroke: #fbf9f6;
  stroke-opacity: 0.8;
  stroke-width: 9px;
  stroke-linejoin: round;
  paint-order: stroke;
  font-size: 42px;
}

.place.city text { font-size: 54px; }
.place.summit text { fill: #3f8144; font-size: 50px; stroke: #e6f3e8; }

.shield rect, .shield path { fill: #fff; stroke: #666; stroke-width: 4; }
.shield text { fill: #333; font-size: 31px; }
.interstate { fill: #fff; font-size: 31px; font-weight: 700; }

.google {
  font-family: Lato, sans-serif;
  font-size: 60px;
  font-weight: 700;
}

/* Status bar */
.status {
  position: relative;
  display: flex;
  align-items: center;
  height: 130px;
  padding: 0 97px 0 80px;
  color: #fff;
}

.clock { width: 134px; font-size: 38px; font-weight: 500; line-height: 48px; }
.notices { display: flex; flex: 1; align-items: center; gap: 28px; }
.notices svg:last-child { margin-left: 20px; }
.signals { display: flex; align-items: center; gap: 4px; }
.signals svg:last-child { margin-left: 20px; }

/* Map controls */
.stage {
  position: relative;
  display: flex;
  flex: 1;
}

.icon { flex: none; cursor: pointer; }

.map-bar {
  position: absolute;
  top: 14px;
  right: 14px;
  display: flex;
  align-items: center;
  justify-content: flex-end;
  gap: 85px;
  width: 640px;
  height: 196px;
  padding-right: 49px;
  border-radius: 20px;
  background: rgba(0, 0, 0, 0.56);
}

.map-switch {
  position: absolute;
  top: 330px;
  right: 21px;
  display: grid;
  place-items: center;
  width: 168px;
  height: 168px;
  border-radius: 50%;
  background: rgba(0, 0, 0, 0.5);
  color: #ecebea;
}

.route {
  position: absolute;
  right: 204px;
  bottom: 249px;
  display: grid;
  place-items: center;
  width: 197px;
  height: 197px;
  border-radius: 50%;
  background: #ac262c;
  box-shadow: 0 8px 18px rgba(0, 0, 0, 0.4);
}

.credit {
  position: absolute;
  right: 14px;
  bottom: 154px;
  color: #4f80ea;
  font-size: 42px;
  line-height: 52px;
  text-decoration-thickness: 2px;
  text-underline-offset: 4px;
}

/* Drawer */
.drawer {
  position: relative;
  display: flex;
  flex-direction: column;
  width: min(78vw, 1120px);
  border-radius: 0 20px 20px 0;
  overflow: hidden;
  background: #121212;
  color: #fafafa;
}

.brand {
  display: flex;
  align-items: center;
  justify-content: space-between;
  height: 301px;
  padding: 0 56px 0 15px;
  background: #ac262c;
}

.logo { display: flex; flex-direction: column; align-items: center; }

.wordmark {
  margin: 0;
  color: #3a2f2c;
  font-family: "Liberation Serif", serif;
  font-size: 57px;
  font-style: italic;
  font-weight: 700;
  line-height: 76px;
}

.wordmark span { color: #fff; }
.brand-actions { display: flex; gap: 70px; }
.muted { color: #f2dfe0; }

.tools, .links {
  display: flex;
  align-items: center;
  justify-content: space-between;
  background: #e65d57;
  color: #1e0b0b;
}

.tools { height: 176px; padding: 0 84px; }
.links { height: 154px; padding: 0 154px; }

.menu {
  flex: 1;
  margin: 0;
  padding: 42px 28px;
  list-style: none;
}

.menu li {
  display: flex;
  align-items: center;
  gap: 42px;
  height: 168px;
}

.entry {
  display: flex;
  flex: 1;
  align-items: center;
  gap: 27px;
  color: #e0e0e0;
  font-size: 63px;
  font-weight: 700;
  line-height: 76px;
  text-align: left;
  cursor: pointer;
}

.entry span { padding-top: 6px; }

.bullet {
  display: grid;
  place-items: center;
  width: 64px;
  height: 64px;
  border: 6px solid #e0e0e0;
  border-radius: 50%;
}

.bullet::before {
  content: "";
  width: 23px;
  height: 32px;
  background: #e0e0e0;
  clip-path: polygon(0 0, 42% 0, 100% 50%, 42% 100%, 0 100%, 52% 50%);
}

/* System navigation */
.gesture-bar {
  position: relative;
  display: flex;
  justify-content: center;
  height: 84px;
  padding-top: 35px;
  background: rgba(0, 0, 0, 0.45);
}

.handle {
  width: 378px;
  height: 14px;
  border-radius: 7px;
  background: #f5f5f5;
}
```
